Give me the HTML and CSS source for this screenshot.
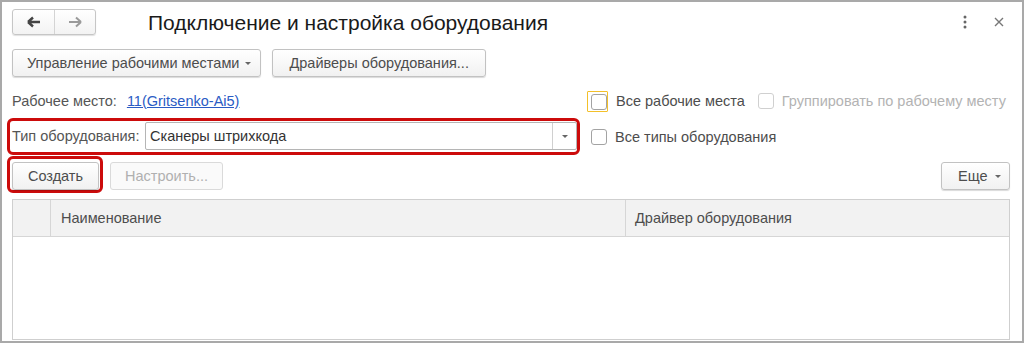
FILE: index.html
```html
<!DOCTYPE html>
<html>
<head>
<meta charset="utf-8"/>
<link rel="stylesheet" href="styles.css">
</head>
<body>
<div class="window">

  <div class="head">
    <div class="nav">
      <button class="nav-btn">
        <svg width="14" height="12" viewBox="0 0 14 12"><path d="M1 6 L6 1.5 M1 6 L6 10.5 M1 6 H13" stroke="#444" stroke-width="2.4" fill="none"/></svg>
      </button>
      <button class="nav-btn">
        <svg width="14" height="12" viewBox="0 0 14 12"><path d="M13 6 L8 1.5 M13 6 L8 10.5 M13 6 H1" stroke="#9a9a9a" stroke-width="2" fill="none"/></svg>
      </button>
    </div>
    <h1 class="title">Подключение и настройка оборудования</h1>
    <div class="head-tools">
      <svg class="kebab" width="4" height="14" viewBox="0 0 4 14"><circle cx="2" cy="2" r="1.5" fill="#666"/><circle cx="2" cy="7" r="1.5" fill="#666"/><circle cx="2" cy="12" r="1.5" fill="#666"/></svg>
      <svg class="close" width="10" height="10" viewBox="0 0 10 10"><path d="M1 1 L9 9 M9 1 L1 9" stroke="#777" stroke-width="1.4"/></svg>
    </div>
  </div>

  <div class="toolbar">
    <button class="btn btn-menu">Управление рабочими местами<span class="caret"></span></button>
    <button class="btn">Драйверы оборудования...</button>
  </div>

  <div class="row">
    <div class="left">
      <span class="label">Рабочее место:</span>
      <a class="link" href="#">11(Gritsenko-Ai5)</a>
    </div>
    <label class="check">
      <span class="focus"><span class="box"></span></span>
      <span class="check-text">Все рабочие места</span>
    </label>
    <label class="check disabled">
      <span class="box"></span>
      <span class="check-text">Группировать по рабочему месту</span>
    </label>
  </div>

  <div class="row row-type">
    <div class="mark mark-type">
      <span class="label">Тип оборудования:</span>
      <div class="select">
        <span class="select-value">Сканеры штрихкода</span>
        <span class="select-btn"><span class="caret"></span></span>
      </div>
    </div>
    <label class="check">
      <span class="box"></span>
      <span class="check-text">Все типы оборудования</span>
    </label>
  </div>

  <div class="commands">
    <div class="mark mark-create">
      <button class="btn btn-create">Создать</button>
    </div>
    <button class="btn btn-disabled">Настроить...</button>
    <button class="btn btn-more">Еще<span class="caret"></span></button>
  </div>

  <div class="table">
    <div class="table-head">
      <div class="col col-icon"></div>
      <div class="col col-name">Наименование</div>
      <div class="col col-driver">Драйвер оборудования</div>
    </div>
    <div class="table-body"></div>
  </div>

</div>
</body>
</html>
```

FILE: styles.css
```css
  body {
    margin: 0;
    padding: 0;
    background: #fff;
    font-family: 'Liberation Sans', Arial, sans-serif;
    font-size: 14.5px;
    color: #4d4d4d;
  }

  .window {
    box-sizing: border-box;
    width: 1024px;
    height: 343px;
    border: 2px solid #a9a9a9;
    padding: 7px 12px 1px 10px;
    display: flex;
    flex-direction: column;
  }

  .head {
    display: flex;
    align-items: center;
    height: 26px;
  }

  .nav {
    display: flex;
    height: 26px;
    border: 1px solid #c6c6c6;
    border-radius: 3px;
    box-sizing: border-box;
    background: linear-gradient(#fff, #f3f3f3);
    box-shadow: 0 1px 1px rgba(0,0,0,0.12);
  }

  .nav-btn {
    width: 41px;
    border: none;
    background: none;
    padding: 0;
    display: flex;
    align-items: center;
    justify-content: center;
  }

  .nav-btn + .nav-btn {
    border-left: 1px solid #d4d4d4;
  }

  .title {
    margin: 0 0 0 52px;
    font-size: 21px;
    font-weight: normal;
    color: #1a1a1a;
    position: relative;
    top: 1px;
  }

  .head-tools {
    margin-left: auto;
    display: flex;
    align-items: center;
    gap: 27px;
    padding-right: 6px;
  }

  .toolbar {
    display: flex;
    gap: 11px;
    margin-top: 14px;
  }

  .btn {
    box-sizing: border-box;
    height: 28px;
    padding: 0 16px;
    border: 1px solid #c2c2c2;
    border-radius: 3px;
    background: linear-gradient(#fff, #f1f1f1);
    box-shadow: 0 1px 1px rgba(0,0,0,0.15);
    font-family: inherit;
    font-size: 14.5px;
    color: #4d4d4d;
    display: flex;
    align-items: center;
    gap: 7px;
  }

  .btn-menu {
    padding: 0 9px 0 14px;
    gap: 6px;
  }

  .caret {
    display: inline-block;
    width: 0;
    height: 0;
    border-left: 3px solid transparent;
    border-right: 3px solid transparent;
    border-top: 3px solid #666;
  }

  .row {
    display: flex;
    align-items: center;
    height: 24px;
    margin-top: 12px;
  }

  .left {
    width: 579px;
    display: flex;
    align-items: center;
  }

  .label {
    color: #555;
  }

  .link {
    margin-left: 10px;
    color: #2a5bc4;
    text-decoration: underline;
  }

  .check {
    display: flex;
    align-items: center;
  }

  .check-text {
    margin-left: 8px;
    color: #4d4d4d;
  }

  .box {
    box-sizing: border-box;
    display: block;
    width: 16px;
    height: 16px;
    border: 1px solid #a3a3a3;
    border-radius: 3px;
    background: #fff;
  }

  .focus {
    display: block;
    box-sizing: border-box;
    width: 21px;
    height: 21px;
    margin-left: -4px;
    padding: 2px 0 0 3px;
    border: 1px solid #f3c02a;
    border-radius: 1px;
  }

  .check.disabled {
    margin-left: 13px;
  }

  .check.disabled .box {
    border-color: #d0d0d0;
  }

  .check.disabled .check-text {
    color: #b3b3b3;
  }

  .row-type {
    height: auto;
    margin-top: 5px;
  }

  .mark {
    border: 3px solid #cc0b0b;
    border-radius: 6px;
    display: flex;
    align-items: center;
  }

  .mark-type {
    width: 573px;
    box-sizing: border-box;
    margin-left: -5px;
    padding: 1px 0 2px 2px;
  }

  .mark-type .label {
    width: 133px;
  }

  .select {
    flex: 1;
    box-sizing: border-box;
    height: 28px;
    border: 1px solid #b5b5b5;
    border-radius: 2px;
    display: flex;
    align-items: center;
    background: #fff;
  }

  .select-value {
    flex: 1;
    padding-left: 4px;
    color: #333;
  }

  .select-btn {
    width: 23px;
    height: 100%;
    border-left: 1px solid #d0d0d0;
    display: flex;
    align-items: center;
    justify-content: center;
  }

  .row-type .check {
    margin-left: 11px;
  }

  .commands {
    display: flex;
    align-items: flex-end;
    margin-top: 1px;
  }

  .mark-create {
    padding: 3px 1px 0 2px;
    margin-left: -5px;
    margin-bottom: -3px;
  }

  .btn-create {
    width: 87px;
    justify-content: center;
  }

  .btn-disabled {
    margin-left: 7px;
    width: 113px;
    justify-content: center;
    color: #b0b0b0;
    border-color: #dadada;
    box-shadow: none;
    background: #fafafa;
  }

  .btn-more {
    margin-left: auto;
    width: 69px;
    padding: 0 0 0 16px;
  }

  .table {
    flex: 1;
    margin-top: 9px;
    border: 1px solid #cfcfcf;
    display: flex;
    flex-direction: column;
  }

  .table-head {
    display: flex;
    height: 36px;
    background: #f2f2f2;
    border-bottom: 1px solid #d6d6d6;
  }

  .col {
    display: flex;
    align-items: center;
    color: #4d4d4d;
  }

  .col-icon {
    width: 37px;
    border-right: 1px solid #d6d6d6;
  }

  .col-name {
    width: 564px;
    padding-left: 10px;
    border-right: 1px solid #d6d6d6;
  }

  .col-driver {
    flex: 1;
    padding-left: 9px;
  }

  .table-body {
    flex: 1;
    background: #fff;
  }
```
